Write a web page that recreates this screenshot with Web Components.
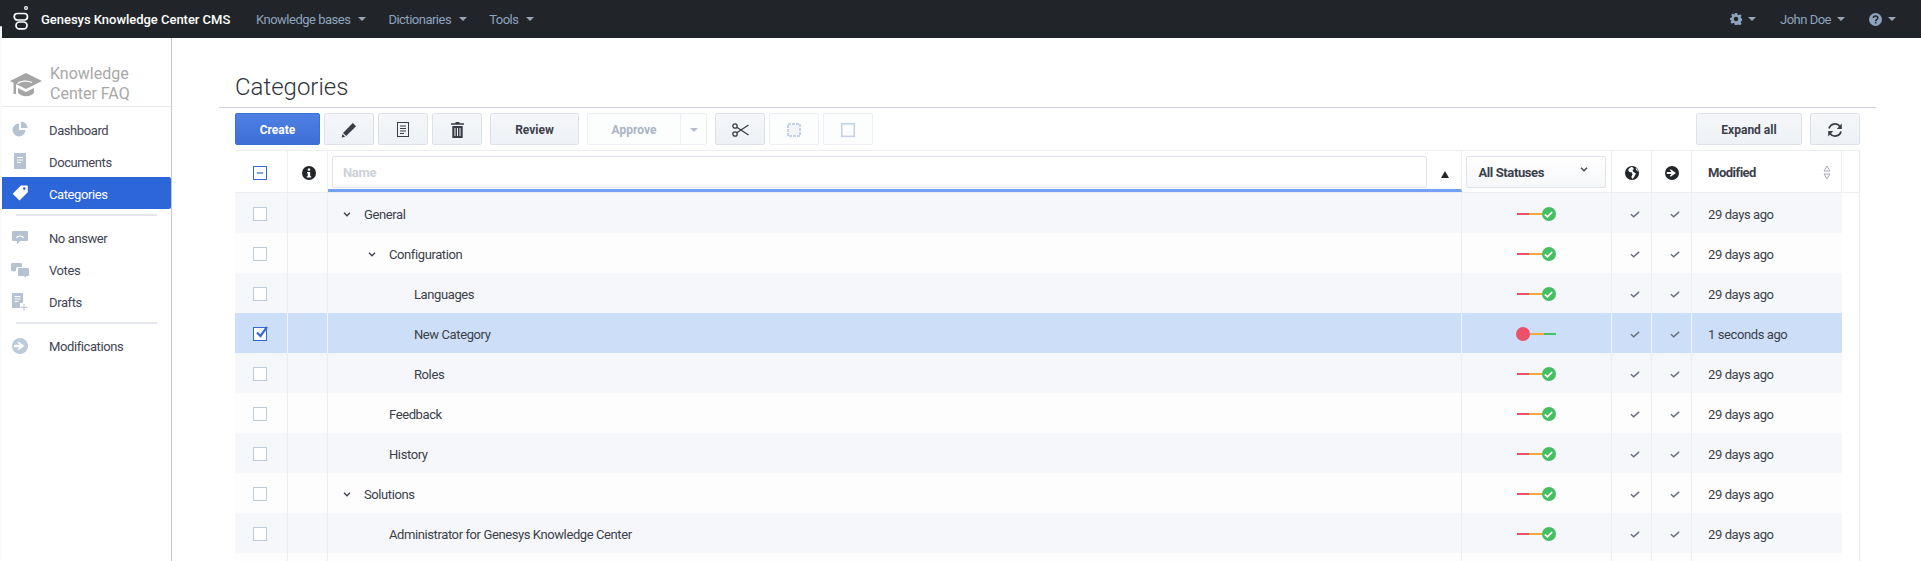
<!DOCTYPE html>
<html>
<head>
<meta charset="utf-8">
<title>Categories</title>
<style>
    html, body { margin: 0; height: 561px; overflow: hidden; }
    body {
        padding-left: 2px;
        box-sizing: border-box;
        font: 13px Roboto, "Liberation Sans", sans-serif;
        color: #3b3f4a;
        background: linear-gradient(#212529 26px, #c9c9c9 26px, #c9c9c9 27px, #fbfbfb 27px);
    }
    kc-app { height: 561px; }
</style>
</head>
<body>
<kc-app></kc-app>

<script>
// icons, all on a 16x16 box unless they say otherwise
const ICONS = {
    logo: '<svg viewBox="0 0 16 24" width="16" height="24" fill="none" stroke="currentColor" stroke-width="1.700"><circle cx="13" cy="2" r="1.400" stroke-width="1.200"/><rect x="1.200" y="7.500" width="13.300" height="6.500" rx="3.250"/><rect x="3" y="16" width="11" height="6.800" rx="3.400"/></svg>',
    gear: '<svg viewBox="0 0 16 16" width="12" height="12" fill="currentColor"><path fill-rule="evenodd" d="M6.500 0h3l.5 2.300 1.400.6 2-1.300 2 2.100-1.200 2 .5 1.300 2.300.5v3l-2.300.5-.5 1.400 1.200 2-2 2-2-1.200-1.400.5-.5 2.300h-3L6 13.700l-1.400-.5-2 1.200-2-2 1.200-2-.5-1.400L0 9.500v-3l2.300-.5.5-1.300-1.200-2 2-2.100 2 1.300L6 2.300zM8 5a3 3 0 1 0 0 6 3 3 0 0 0 0-6z"/></svg>',
    help: '<svg viewBox="0 0 16 16" width="13" height="13"><circle cx="8" cy="8" r="8" fill="currentColor"/><path d="M5.300 6.200C5.400 4.600 6.500 3.800 8 3.800c1.600 0 2.800.9 2.800 2.300 0 2-2.600 2-2.600 3.700" fill="none" stroke="#212529" stroke-width="1.800"/><rect x="7.200" y="10.800" width="2" height="2" fill="#212529"/></svg>',
    cap: '<svg viewBox="0 0 32 24" width="32" height="24" fill="#a5a5a5"><path d="M16 0 32 8 16 16 6 11V21H3.500V9.800L0 8z"/><path d="M22 9.500C17 7 11 8 7.500 10.500" fill="none" stroke="#fff" stroke-width="1.300"/><path d="M8 15 16 19 24 15V19.500C21 24.500 11 24.500 8 19.500z"/></svg>',
    pie: '<svg viewBox="0 0 16 16" width="16" height="16" fill="#b4c2d2"><path d="M7 2.500V9h6.500A6.500 6.500 0 1 1 7 2.500z"/><path d="M9 .5A6.500 6.500 0 0 1 15.500 7H9z"/></svg>',
    doc: '<svg viewBox="0 0 12 16" width="12" height="16"><rect width="12" height="16" fill="#b4c2d2"/><path d="M3 4.500h6M3 7h6M3 9.500h4" stroke="#fff" stroke-width="1"/></svg>',
    tag: '<svg viewBox="0 0 16 16" width="16" height="16" fill="#fff"><path fill-rule="evenodd" d="M9 .5h6a.8.8 0 0 1 .8.8v6L7.500 15.500.7 8.700zM12.300 2.300a1.300 1.300 0 1 0 0 2.600 1.300 1.300 0 0 0 0-2.600z"/></svg>',
    reply: '<svg viewBox="0 0 16 15" width="16" height="15"><path d="M1 0h14a1 1 0 0 1 1 1v8a1 1 0 0 1-1 1H8l-3 3.500V10H1a1 1 0 0 1-1-1V1a1 1 0 0 1 1-1z" fill="#b4c2d2"/><path d="M4.500 7C5.500 4.500 10.500 4.500 11.500 7" fill="none" stroke="#fff" stroke-width="1.300"/></svg>',
    chat: '<svg viewBox="0 0 18 15" width="18" height="15" fill="#b4c2d2"><path d="M1 0h9a1 1 0 0 1 1 1v3H7a2 2 0 0 0-2 2v2H4L2.500 9.500V8H1a1 1 0 0 1-1-1V1a1 1 0 0 1 1-1z"/><path d="M8 5h9a1 1 0 0 1 1 1v6a1 1 0 0 1-1 1h-2v2l-2-2H8a1 1 0 0 1-1-1V6a1 1 0 0 1 1-1z"/></svg>',
    draft: '<svg viewBox="0 0 16 18" width="16" height="18"><path d="M0 0h11v10H8v5H0z" fill="#b4c2d2"/><path d="M2.500 3.500h6M2.500 6h6M2.500 8.500h4" stroke="#fff"/><path d="M12 11v6.500M8.500 14.300H15.500" stroke="#b4c2d2" stroke-width="1"/></svg>',
    arrow: '<svg viewBox="0 0 16 16" width="16" height="16"><circle cx="8" cy="8" r="8" fill="currentColor"/><path d="M2 6.800h5.500L5.200 4.300l1.700-.3L12.500 8l-5.600 4-1.700-.3 2.300-2.500H2z" fill="#fff"/></svg>',
    info: '<svg viewBox="0 0 14 14" width="14" height="14"><circle cx="7" cy="7" r="7" fill="#22262a"/><rect x="5.800" y="2.500" width="2.400" height="2.200" fill="#fff"/><path d="M5 6h3.200v4.200H9.200v1.300H4.800v-1.300h1V7.300H5z" fill="#fff"/></svg>',
    globe: '<svg viewBox="0 0 14 14" width="14" height="14"><circle cx="7" cy="7" r="7" fill="#22262a"/><path d="M7 .8 4.500 2 3 4l1.500 2 2.400.5.600 2L6.300 11l1.400 2 2-3L11 7.500 8.500 6 7.500 4l1.500-1zM10.500 2.500l1.500 2.500 1 .5-1-3z" fill="#fff"/></svg>',
    pencil: '<svg viewBox="0 0 16 16" width="16" height="16" fill="#3a3d46"><path d="M11.800 1 15 4.200 5.200 14 2 11z"/><path d="M1.500 12 4.200 14.700.6 15.600z"/></svg>',
    notes: '<svg viewBox="0 0 12 15" width="12" height="15" fill="none" stroke="#3a3d46"><rect x=".5" y=".5" width="11" height="14"/><path d="M3 4h6M3 6.500h6M3 9h6M3 11.500h4"/></svg>',
    trash: '<svg viewBox="0 0 13 16" width="13" height="16" fill="#3a3d46"><path d="M4.500 0h4v1.200H13v1.500H0V1.200h4.500z"/><path fill-rule="evenodd" d="M1.300 4h10.400v12H1.300zM3.500 6v8h1V6zM6 6v8h1V6zM8.500 6v8h1V6z"/></svg>',
    scissors: '<svg viewBox="0 0 17 14" width="17" height="14" fill="none" stroke="#3a3d46" stroke-width="1.300"><circle cx="3" cy="3" r="2.200"/><circle cx="3" cy="11" r="2.200"/><path d="M4.800 4.200 16.500 12M4.800 9.800 16.500 2"/></svg>',
    dashed: '<svg viewBox="0 0 14 14" width="14" height="14" fill="none"><rect x="2" y="2" width="10" height="10" fill="#f2f5f9"/><rect x="1" y="1" width="12" height="12" stroke="#c5d3e5" stroke-width="2" stroke-dasharray="3 1"/></svg>',
    square: '<svg viewBox="0 0 14 14" width="14" height="14" fill="none" stroke="#c3d0e2" stroke-width="1.500"><rect x=".75" y=".75" width="12.500" height="12.500"/></svg>',
    refresh: '<svg viewBox="0 0 16 16" width="16" height="16" fill="none" stroke="#3a3d46" stroke-width="1.800"><path d="M2 6.500A6.200 6.200 0 0 1 13 4.500M14 9.500A6.200 6.200 0 0 1 3 11.500"/><path d="M14.800 1.500V7H9.800zM1.200 14.500V9H6.200z" fill="#3a3d46" stroke="none"/></svg>',
    chevron: '<svg viewBox="0 0 8 5" width="8" height="5" fill="none" stroke="currentColor" stroke-width="1.300"><path d="M1 .8 4 3.800 7 .8"/></svg>',
    check: '<svg viewBox="0 0 11 8" width="10" height="7" fill="none" stroke="#656c7b" stroke-width="1.600"><path d="M.8 3.600 4 6.600 10.200 1"/></svg>',
    sort: '<svg viewBox="0 0 8 15" width="8" height="15" fill="none" stroke="#a7abb3"><path d="M4 1 7 6H1zM4 14 1 9h6z"/></svg>'
};

class KcTopbar extends HTMLElement {
    constructor() {
        super();
        this.attachShadow({mode: 'open'}).innerHTML = `
            <style>
                :host { display: flex; align-items: center; height: 38px; background: #212529; padding-left: 11px; font-size: 13px; }
                .logo { color: #fff; display: flex; margin-top: -2px; }
                .brand { color: #fff; font-weight: 500; margin-left: 12px; width: 215px; white-space: nowrap; letter-spacing: -.03px; }
                .space { flex: 1; }
                ::slotted(kc-nav-item[slot="left"]) { margin-right: 22px; }
                ::slotted(kc-nav-item[slot="right"]) { margin-right: 24px; --caret-gap: 6px; }
                ::slotted(kc-nav-item:last-child) { margin-right: 25px; }
            </style>
            <span class="logo">${ICONS.logo}</span>
            <span class="brand">Genesys Knowledge Center CMS</span>
            <slot name="left"></slot>
            <span class="space"></span>
            <slot name="right"></slot>`;
    }
}
customElements.define('kc-topbar', KcTopbar);

class KcNavItem extends HTMLElement {
    constructor() {
        super();
        this.attachShadow({mode: 'open'}).innerHTML = `
            <style>
                :host { display: inline-flex; align-items: center; color: #8ea3bd; white-space: nowrap; letter-spacing: -.5px; }
                .caret { margin-left: var(--caret-gap, 8px); width: 0; height: 0; border: 4px solid transparent; border-top-color: #9aa6b5; border-bottom: 0; }
                ::slotted(span) { display: flex; }
            </style>
            <slot></slot><span class="caret"></span>`;
    }
}
customElements.define('kc-nav-item', KcNavItem);

class KcSideItem extends HTMLElement {
    constructor() {
        super();
        this.attachShadow({mode: 'open'}).innerHTML = `
            <style>
                :host { display: flex; align-items: center; height: 32px; color: #3f4455; letter-spacing: -.4px; }
                :host([active]) { background: #2d66d8; color: #fff; border-radius: 0 2px 2px 0; }
                :host([lead]) .label { padding-top: 2px; }
                .icon { width: 47px; display: flex; justify-content: center; padding-right: 11px; box-sizing: border-box; color: #bccadb; }
            </style>
            <span class="icon">${ICONS[this.getAttribute('icon')]}</span><span class="label"><slot></slot></span>`;
    }
}
customElements.define('kc-side-item', KcSideItem);

class KcSidebar extends HTMLElement {
    constructor() {
        super();
        this.attachShadow({mode: 'open'}).innerHTML = `
            <style>
                :host { display: block; width: 169px; background: #fff; border-right: 1px solid #c3c8d4; flex: none; }
                .brand { height: 69px; box-sizing: border-box; border-bottom: 1px solid #e6e9ef; display: flex; align-items: flex-end; gap: 8px; padding: 0 0 2px 8px; }
                .brand-name { font-size: 16px; line-height: 20px; color: #a8a8a8; }
                .logo { display: flex; margin-bottom: 7px; }
                .menu { padding-top: 6px; }
                ::slotted(hr) { border: 0; height: 2px; background: #e4e8ee; margin: 5px 14px 6px 14px; }
                ::slotted(hr.last) { margin: 4px 14px 6px 14px; }
            </style>
            <div class="brand"><span class="logo">${ICONS.cap}</span><span class="brand-name">Knowledge<br>Center FAQ</span></div>
            <div class="menu"><slot></slot></div>`;
    }
}
customElements.define('kc-sidebar', KcSidebar);

class KcButton extends HTMLElement {
    constructor() {
        super();
        this.attachShadow({mode: 'open'}).innerHTML = `
            <style>
                :host {
                    display: inline-flex; align-items: center; justify-content: center; box-sizing: border-box;
                    height: 32px; width: 50px; flex: none; padding-top: 1px; border: 1px solid #dde2ea; border-radius: 2px;
                    background: linear-gradient(#f5f7fa, #eef1f5); color: #3c404b; font-weight: 700; font-size: 12px;
                }
                :host([primary]) { background: linear-gradient(#4f80e2, #3d6fd8); border-color: #3d6fd8; color: #fff; }
                :host([disabled]) { background: #fcfdfd; border-color: #eceff3; color: #aab4c2; }
            </style>
            <slot></slot>`;
    }
}
customElements.define('kc-button', KcButton);

class KcToolbar extends HTMLElement {
    constructor() {
        super();
        this.attachShadow({mode: 'open'}).innerHTML = `
            <style>
                :host { display: flex; gap: 4px; height: 32px; }
            </style>
            <slot></slot>`;
    }
}
customElements.define('kc-toolbar', KcToolbar);

class KcCheckbox extends HTMLElement {
    constructor() {
        super();
        const state = this.getAttribute('state');
        const mark = state === 'checked'
            ? '<svg viewBox="0 0 15 15" width="15" height="15"><path d="M3 6.500 6.500 10 13 .8" fill="none" stroke="#3468d6" stroke-width="2.200"/></svg>'
            : state === 'mixed'
                ? '<svg viewBox="0 0 13 13" width="12" height="12"><path d="M3 6.500h7" stroke="#3468d6" stroke-width="1.300"/></svg>'
                : '';
        this.attachShadow({mode: 'open'}).innerHTML = `
            <style>
                :host { display: block; position: relative; width: 12px; height: 12px; border: 1px solid #bccadb; background: #fff; }
                :host([state]) { border-color: #3468d6; }
                svg { position: absolute; left: 0; top: -2px; }
                :host([state="mixed"]) svg { top: 0; }
            </style>
            ${mark}`;
    }
}
customElements.define('kc-checkbox', KcCheckbox);

// the red / orange / green progress line of a row
class KcStatus extends HTMLElement {
    constructor() {
        super();
        const red = this.getAttribute('state') === 'draft';
        this.attachShadow({mode: 'open'}).innerHTML = `
            <style>
                :host { display: flex; align-items: center; justify-content: center; padding-right: 1px; }
                .line { width: 13px; height: 2px; }
                .dot { width: 14px; height: 14px; border-radius: 50%; display: flex; align-items: center; justify-content: center; }
            </style>
            ${red
                ? '<span class="dot" style="background:#ec5169"></span><span class="line" style="background:#f5a742;width:14px"></span><span class="line" style="background:#48bf6a;width:12px"></span>'
                : '<span class="line" style="background:#ec5169;width:12px"></span><span class="line" style="background:#f5a742"></span><span class="dot" style="background:#45bf63"><svg viewBox="0 0 9 7" width="9" height="7" fill="none" stroke="#fff" stroke-width="1.700"><path d="M.8 3.400 3.400 5.800 8.200 1"/></svg></span>'}`;
    }
}
customElements.define('kc-status', KcStatus);

const COLUMNS = '53px 40px 1134px 150px 40px 40px 150px 18px';

class KcTableHead extends HTMLElement {
    constructor() {
        super();
        this.attachShadow({mode: 'open'}).innerHTML = `
            <style>
                :host { display: grid; grid-template-columns: ${COLUMNS}; height: 43px; border-top: 1px solid #eceef2; border-bottom: 1px solid #eceef2; box-sizing: border-box; background: #fff; }
                .cell { display: flex; align-items: center; justify-content: center; padding-top: 2px; border-right: 1px solid #eceef2; box-sizing: border-box; min-width: 0; }
                .first { padding-right: 3px; }
                .info { padding-left: 2px; }
                .name { border-bottom: 3px solid #72a1f5; height: 41px; padding: 0 0 0 4px; justify-content: flex-start; align-items: flex-start; }
                .filter { width: 1095px; height: 32px; margin-top: 5px; padding: 1px 0 0 10px; box-sizing: border-box; border: 1px solid #dfe3ea; border-radius: 2px; font-weight: 700; color: #ccd1da; letter-spacing: -.3px; display: flex; align-items: center; }
                .tri { width: 0; height: 0; margin: 20px 0 0 14px; border: 4.500px solid transparent; border-bottom: 7px solid #23262b; border-top: 0; }
                .status { align-items: flex-start; padding: 5px 2px 0 0; }
                .select { width: 140px; height: 32px; box-sizing: border-box; border: 1px solid #dfe3ea; border-radius: 2px; background: linear-gradient(#fff, #f6f7f9); font-weight: 700; color: #3c404b; letter-spacing: -.4px; display: flex; align-items: center; justify-content: space-between; padding: 1px 17px 0 12px; }
                .select span { display: flex; margin-top: -6px; }
                .modified { justify-content: space-between; padding: 2px 10px 0 16px; font-weight: 700; color: #3c404b; letter-spacing: -.5px; }
                .arrow { color: #22262a; }
                .last { border-right: 1px solid #e8eaee; }
                svg { display: block; }
            </style>
            <div class="cell first"><kc-checkbox state="mixed"></kc-checkbox></div>
            <div class="cell info">${ICONS.info}</div>
            <div class="cell name"><div class="filter">Name</div><div class="tri"></div></div>
            <div class="cell status"><div class="select">All Statuses<span>${ICONS.chevron}</span></div></div>
            <div class="cell">${ICONS.globe}</div>
            <div class="cell arrow">${ICONS.arrow.replace(/width="16" height="16"/, 'width="14" height="14"')}</div>
            <div class="cell modified">Modified ${ICONS.sort}</div>
            <div class="cell last"></div>`;
    }
}
customElements.define('kc-table-head', KcTableHead);

class KcTableRow extends HTMLElement {
    constructor() {
        super();
        const depth = Number(this.getAttribute('depth') || 0);
        const open = this.hasAttribute('open');
        const checked = this.hasAttribute('selected');
        const status = this.getAttribute('status');
        const when = this.getAttribute('when');
        this.attachShadow({mode: 'open'}).innerHTML = `
            <style>
                :host { display: grid; grid-template-columns: ${COLUMNS}; height: 40px; color: #3b3f4a; background: #fdfdfe; letter-spacing: -.4px; }
                :host(:nth-child(odd)) { background: #f5f7fb; }
                :host([selected]) { background: #cddff8; }
                .cell { display: flex; align-items: center; justify-content: center; padding-top: 2px; border-right: 1px solid #eceef2; box-sizing: border-box; min-width: 0; }
                :host([selected]) .cell:not(.tail) { border-right-color: #f2f6fc; }
                .first { padding-right: 3px; }
                .name { justify-content: flex-start; padding-left: ${15 + depth * 25}px; white-space: nowrap; }
                .toggle { width: 21px; color: #3b3f4a; display: flex; }
                .tick { padding-left: 6px; }
                .when { justify-content: flex-start; padding-left: 16px; border-right: 0; }
                .tail { background: #fff; border-right: 1px solid #e8eaee; }
                svg { display: block; }
            </style>
            <div class="cell first">${this.hasAttribute('blank') ? '' : `<kc-checkbox ${checked ? 'state="checked"' : ''}></kc-checkbox>`}</div>
            <div class="cell"></div>
            <div class="cell name"><span class="toggle">${open ? ICONS.chevron : ''}</span><slot></slot></div>
            <div class="cell">${status ? `<kc-status state="${status}"></kc-status>` : ''}</div>
            <div class="cell tick">${when ? ICONS.check : ''}</div>
            <div class="cell tick">${when ? ICONS.check : ''}</div>
            <div class="cell when">${when || ''}</div>
            <div class="cell tail"></div>`;
    }
}
customElements.define('kc-table-row', KcTableRow);

class KcApp extends HTMLElement {
    constructor() {
        super();
        const rows = [
            ['General', 0, true], ['Configuration', 1, true], ['Languages', 2], ['New Category', 2],
            ['Roles', 2], ['Feedback', 1], ['History', 1], ['Solutions', 0, true],
            ['Administrator for Genesys Knowledge Center', 1]
        ];
        this.attachShadow({mode: 'open'}).innerHTML = `
            <style>
                :host { display: flex; flex-direction: column; overflow: hidden; }
                .body { flex: 1; display: flex; min-height: 0; background: #fff; }
                main { flex: 1; min-width: 0; padding: 0 61px 0 63px; overflow: hidden; }
                h1 { font-size: 24px; font-weight: 300; line-height: 28px; color: #2f333b; margin: 0 -16px; padding: 35px 16px 6px; border-bottom: 1px solid #cfd2da; }
                kc-toolbar { margin: 5px 0; }
                .sep { margin-left: 4px; }
                .group { display: flex; margin-left: 4px; }
                .group kc-button:first-child { border-right: 0; border-radius: 2px 0 0 2px; width: 93px; }
                .group kc-button:last-child { width: 27px; border-radius: 0 2px 2px 0; }
                .caret { width: 0; height: 0; border: 4px solid transparent; border-top-color: #b4bdca; border-bottom: 0; }
                .space { flex: 1; }
            </style>
            <kc-topbar>
                <kc-nav-item slot="left">Knowledge bases</kc-nav-item>
                <kc-nav-item slot="left">Dictionaries</kc-nav-item>
                <kc-nav-item slot="left">Tools</kc-nav-item>
                <kc-nav-item slot="right"><span>${ICONS.gear}</span></kc-nav-item>
                <kc-nav-item slot="right">John Doe</kc-nav-item>
                <kc-nav-item slot="right"><span>${ICONS.help}</span></kc-nav-item>
            </kc-topbar>
            <div class="body">
                <kc-sidebar>
                    <kc-side-item icon="pie" lead>Dashboard</kc-side-item>
                    <kc-side-item icon="doc" lead>Documents</kc-side-item>
                    <kc-side-item icon="tag" lead active>Categories</kc-side-item>
                    <hr>
                    <kc-side-item icon="reply">No answer</kc-side-item>
                    <kc-side-item icon="chat">Votes</kc-side-item>
                    <kc-side-item icon="draft">Drafts</kc-side-item>
                    <hr class="last">
                    <kc-side-item icon="arrow">Modifications</kc-side-item>
                </kc-sidebar>
                <main>
                    <h1>Categories</h1>
                    <kc-toolbar>
                        <kc-button primary style="width:85px">Create</kc-button>
                        <kc-button>${ICONS.pencil}</kc-button>
                        <kc-button>${ICONS.notes}</kc-button>
                        <kc-button>${ICONS.trash}</kc-button>
                        <kc-button class="sep" style="width:89px">Review</kc-button>
                        <span class="group">
                            <kc-button disabled>Approve</kc-button>
                            <kc-button disabled><span class="caret"></span></kc-button>
                        </span>
                        <kc-button class="sep">${ICONS.scissors}</kc-button>
                        <kc-button disabled>${ICONS.dashed}</kc-button>
                        <kc-button disabled>${ICONS.square}</kc-button>
                        <span class="space"></span>
                        <kc-button style="width:106px;margin-right:4px">Expand all</kc-button>
                        <kc-button>${ICONS.refresh}</kc-button>
                    </kc-toolbar>
                    <div class="table">
                        <kc-table-head></kc-table-head>
                        <div class="rows">
                            ${rows.map(([name, depth, open]) => `<kc-table-row depth="${depth}" ${open ? 'open' : ''} ${name === 'New Category' ? 'selected status="draft" when="1 seconds ago"' : 'status="done" when="29 days ago"'}>${name}</kc-table-row>`).join('')}
                            <kc-table-row blank></kc-table-row>
                        </div>
                    </div>
                </main>
            </div>`;
    }
}
customElements.define('kc-app', KcApp);
</script>
</body>
</html>
